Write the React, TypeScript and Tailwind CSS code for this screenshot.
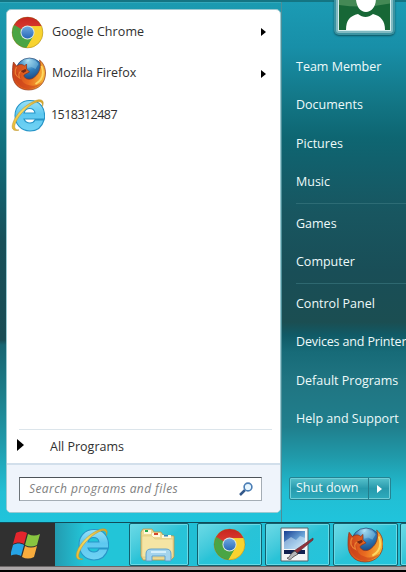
import React from "react";

type IconProps = { className?: string };

function ChromeIcon({ className }: IconProps) {
  return (
    <svg viewBox="0 0 32 32" className={className}>
      <defs>
        <linearGradient id="cr" x1="0" y1="0" x2="0" y2="1">
          <stop offset="0" stopColor="#c8251f" />
          <stop offset="1" stopColor="#e2473b" />
        </linearGradient>
        <linearGradient id="cb" x1="0" y1="0" x2="0" y2="1">
          <stop offset="0" stopColor="#6fa9e0" />
          <stop offset="1" stopColor="#2868b8" />
        </linearGradient>
      </defs>
      <circle cx="16" cy="16" r="15" fill="#f8d32f" />
      <path d="M16 16 3 8.500A15 15 0 0 0 15 31l7-12z" fill="#4aa544" />
      <path d="M3 8.500A15 15 0 0 1 29.700 10H16L9.500 19.500z" fill="url(#cr)" />
      <path d="M15 31A15 15 0 0 0 29.700 10H16l6 9.500z" fill="#f8d32f" />
      <path d="M3 8.500 9.500 20l1-7z" fill="#4aa544" />
      <circle cx="16" cy="16" r="6.800" fill="#dfe9e3" />
      <circle cx="16" cy="16" r="5.900" fill="url(#cb)" />
      <circle cx="16" cy="16" r="15" fill="none" stroke="#735c2b" strokeOpacity=".4" strokeWidth=".8" />
    </svg>
  );
}

function FirefoxIcon({ className }: IconProps) {
  return (
    <svg viewBox="0 0 34 34" className={className}>
      <defs>
        <radialGradient id="fb" cx=".45" cy=".1" r=".85">
          <stop offset="0" stopColor="#b4e6f8" />
          <stop offset=".4" stopColor="#3180bd" />
          <stop offset="1" stopColor="#102b65" />
        </radialGradient>
        <linearGradient id="fo" x1="0" y1=".3" x2="1" y2=".5">
          <stop offset="0" stopColor="#c9421b" />
          <stop offset=".55" stopColor="#ea6b20" />
          <stop offset="1" stopColor="#f8b936" />
        </linearGradient>
      </defs>
      <circle cx="18" cy="15" r="14" fill="url(#fb)" stroke="#163262" strokeWidth=".6" />
      <path d="M16 5c4-3 9-2 11 2l-3 5-4-2-4 1z" fill="#8bc9e6" opacity=".5" />
      <path d="M2 5l3 4c3-2 6-2 8 0l2-2v5l3 3-4 2c-2 1-2 2-1 3 2 3 7 3 10 0 5-4 7-10 5-17 4 3 6 8 6 13 0 10-7 17-17 17S1 26 1 17c0-5 0-8 1-12z" fill="url(#fo)" stroke="#8f331a" strokeWidth=".7" />
      <path d="M3 19c1 7 7 13 14 13 6 0 11-3 14-7-4 3-9 5-14 3-5-1-8-5-8-10l-3-3z" fill="#c63c19" opacity=".55" />
      <path d="M5 10c-3 5-1 9 3 11-2-4 0-7 4-8" fill="none" stroke="#f4943b" strokeWidth="1.200" opacity=".75" />
      <path d="M30 9c3 8 1 14-6 18" fill="none" stroke="#ffe16b" strokeWidth="1.800" opacity=".85" />
      <path d="M9 14l5-2 1 2-3 2z" fill="#742816" />
    </svg>
  );
}

function ExplorerIcon({ className }: IconProps) {
  return (
    <svg viewBox="0 0 34 34" className={className}>
      <defs>
        <linearGradient id="ie" x1="0" y1="0" x2="0" y2="1">
          <stop offset="0" stopColor="#9be2f8" />
          <stop offset=".45" stopColor="#5dc8f0" />
          <stop offset="1" stopColor="#72d3f4" />
        </linearGradient>
        <linearGradient id="ring" x1="0" y1="1" x2="1" y2="0">
          <stop offset="0" stopColor="#e8b72e" />
          <stop offset=".5" stopColor="#f6dc62" />
          <stop offset="1" stopColor="#d5a426" />
        </linearGradient>
      </defs>
      <path fillRule="evenodd" d="M19 2.500C10 2.500 4 9 4 17.500S10 33 19 33c7 0 12-4 14-11h-9c-1 2-3 3-5 3-3 0-5-1.500-6-4h20.500C34.500 10 29 2.500 19 2.500zM13 15c1-3 3-4.500 5.500-4.500S23.500 12 24 15z" fill="url(#ie)" stroke="#2795c8" strokeWidth="1.100" />
      <path d="M31.500 8.500C34 2 30 .2 23 3.200 14 7 5 16 2 24.500c-2.200 6 0 9.500 6 7.500-4.500.3-5.300-3-3.300-7.500C8 17 15.500 9 23.500 5c5-2.500 8.500-1.500 8 3.500z" fill="url(#ring)" stroke="#bb9331" strokeWidth=".5" />
    </svg>
  );
}

function WindowsIcon() {
  return (
    <svg viewBox="0 0 30 28" className="h-[28px] w-[30px]">
      <path d="M5 2c4-2 7-2 11 0l-3 11c-4-2-7-2-11 0z" fill="#e3262d" />
      <path d="M17 3c4 2 8 2 12 0l-3 11c-4 2-8 2-12 0z" fill="#88c440" />
      <path d="M2 14c4-2 7-2 11 0l-3 11c-4-2-7-2-11 0z" fill="#26a4e6" />
      <path d="M14 15c4 2 8 2 12 0l-3 11c-4 2-8 2-12 0z" fill="#f8ac3d" />
    </svg>
  );
}

function FolderIcon() {
  return (
    <svg viewBox="0 0 38 36" className="h-[36px] w-[38px]">
      <path d="M2 5 4 2h9l2 3h7l2 3 11 1v21l-3 3H4L2 29z" fill="#edda94" stroke="#b8974b" strokeWidth=".8" />
      <path d="M5 3h7v4H5zm8 3h8v4h-8zm10 2h9v3h-9z" fill="#fff8dc" />
      <path d="M6 3h3v2H6z" fill="#25a748" /><path d="M15 6h4v2h-4z" fill="#d5472c" /><path d="M25 8h4v1.500h-4z" fill="#3487bd" />
      <path d="M3 9h10l3 3h18v18H3z" fill="#f5e5a4" stroke="#d7bd70" strokeWidth=".5" />
      <path d="M7 34v-7q0-5 5-5h15q5 0 5 5v7h-6v-5H13v5z" fill="#a4d4ed" stroke="#5a9cc8" strokeWidth=".9" />
      <path d="M12 25h15" stroke="#e6f8ff" strokeWidth="1.500" />
    </svg>
  );
}

function PaintIcon() {
  return (
    <svg viewBox="0 0 34 36" className="h-[36px] w-[34px]">
      <defs>
        <linearGradient id="sky" x1="0" y1="0" x2="1" y2="1">
          <stop offset="0" stopColor="#173d91" /><stop offset=".6" stopColor="#6faadb" /><stop offset="1" stopColor="#e8f3fb" />
        </linearGradient>
      </defs>
      <path d="M1 1h27v33H1z" fill="#f3f5f6" stroke="#55656d" />
      <path d="M4 4h21v18H4z" fill="url(#sky)" />
      <path d="M4 15l7-5 5 3 4-4 5 2v11H4z" fill="#d5eaf8" opacity=".5" />
      <path d="M4 23h21v4H4z" fill="#102150" />
      <path d="m33 11-19 13 2 3 17-14z" fill="#923039" stroke="#622e35" strokeWidth=".7" />
      <path d="m15 24 3 3-5 3c-2 3-4 3-6 1 3 0 3-5 8-7z" fill="#b4b5b8" stroke="#444" strokeWidth=".8" />
    </svg>
  );
}

function Arrow({ className }: IconProps) {
  return <svg viewBox="0 0 5 8" preserveAspectRatio="none" className={className}><path d="M0 0 5 4 0 8z" fill="currentColor" /></svg>;
}

function Place({ children }: { children: React.ReactNode }) {
  return <div className="flex h-[38.5px] items-center whitespace-nowrap">{children}</div>;
}

function Separator() {
  return <div className="h-[3px] pt-px"><div className="h-px bg-[#3c7a82]/60" /></div>;
}

export default function App() {
  const taskButton = "flex h-[43px] shrink-0 items-center justify-center rounded-[2px] border border-[#12606e] bg-linear-to-br from-[#6bdae6] via-[#29c3d7] to-[#23c4dc] shadow-[inset_0_0_0_1px_#68dae6]";
  return (
    <main className="flex h-[572px] w-[406px] flex-col overflow-hidden bg-black font-['Open_Sans','Noto_Sans',sans-serif] text-[12.5px] font-medium">
      <section className="flex h-[522px] border-t-2 border-[#147583] bg-[linear-gradient(to_bottom,#1b9bb1_0px,#168da3_70px,#11717f_140px,#125f6c_190px,#174f58_240px,#194c54_338px,#176572_343px,#1c7d89_390px,#209aaa_440px,#22bfd4_490px,#20c4dc_520px)] pl-[6px] shadow-[inset_0_1px_#31a8bb]">
        <div className="flex w-[275px] shrink-0 flex-col pt-[7px]">
          <div className="flex h-[504px] flex-col overflow-hidden rounded-[5px] border border-[#9bc9d1] bg-white text-[#303030]">
            <div className="flex h-[419px] flex-col pt-px">
              <div className="flex h-[42px] items-center pr-[14px] pl-[4px]"><ChromeIcon className="h-[33px] w-[33px]" /><span className="ml-[8px] tracking-[0.08px]">Google Chrome</span><Arrow className="ml-auto h-[8px] w-[5px] text-black" /></div>
              <div className="flex h-[41px] items-center pr-[14px] pl-[4px]"><FirefoxIcon className="h-[34px] w-[35px]" /><span className="ml-[6px]">Mozilla Firefox</span><Arrow className="ml-auto h-[8px] w-[5px] text-black" /></div>
              <div className="flex h-[42px] items-center pl-[4px]"><ExplorerIcon className="h-[34px] w-[34px]" /><span className="ml-[6px] tracking-[-0.55px]">1518312487</span></div>
            </div>
            <div className="mr-[8px] ml-[12px] h-px shrink-0 bg-[#dce5eb]" />
            <div className="flex h-[33px] shrink-0 items-center pl-[10px]"><Arrow className="mb-[3px] h-[12px] w-[7px] text-black" /><span className="ml-[26px] pt-px">All Programs</span></div>
            <div className="flex flex-1 items-center border-t-2 border-[#d2dfeb] bg-[#eff4fb] pl-[12px]">
              <div className="flex h-[24px] w-[243px] items-center justify-between border border-[#a5adb5] border-t-[#4e5358] border-l-[#6d7378] bg-white pr-[8px] pl-[9px]">
                <span className="text-[12px] font-normal tracking-[0.42px] text-[#808080] italic">Search programs and files</span>
                <svg viewBox="0 0 14 14" className="h-[14px] w-[14px]"><path d="m1 13 5-5" stroke="#34598a" strokeWidth="2.500" /><circle cx="9" cy="5" r="3.900" fill="#e7f6ff" stroke="#4c7eb5" strokeWidth="1.600" /></svg>
              </div>
            </div>
          </div>
        </div>
        <aside className="flex min-w-0 flex-1 flex-col border-l border-[#4d8e98] bg-[linear-gradient(to_bottom,#1b9bb4_0px,#188fa8_45px,#137888_95px,#0e6672_135px,#125f6b_165px,#185660_210px,#194e57_270px,#1b4e52_320px,#105a66_333px,#176b78_350px,#207582_380px,#207f8d_425px,#209aaa_455px,#21bed3_490px,#20c4dc_520px)] pl-[14px] text-[#edfafa]">
          <div className="-mt-[2px] flex h-[48px] shrink-0 items-start pl-[38px]">
            <div className="h-[35px] w-[61px] rounded-b-[5px] border-2 border-t-0 border-[#3c93a1] bg-[#80bac2] px-[2px] pb-[2px] shadow-[0_1px_2px_#0e5360]">
              <div className="h-full overflow-hidden border border-t-0 border-[#d6eeee] bg-[#176736]">
                <svg viewBox="0 0 53 30" className="h-[30px] w-[53px]"><path d="M0 0h53v3Q27 9 0 5z" fill="#62a06a" opacity=".6" /><path d="M17-6h19c3 9-2 18-9 18S16 4 17-6zM7 30c0-10 4-14 12-16 5 4 10 4 15 0 8 2 12 7 12 16z" fill="white" /></svg>
              </div>
            </div>
          </div>
          <Place>Team Member</Place><Place>Documents</Place><Place>Pictures</Place><Place>Music</Place>
          <Separator />
          <Place>Games</Place><Place>Computer</Place>
          <Separator />
          <Place>Control Panel</Place><Place><span className="tracking-[-0.15px]">Devices and Printer</span></Place><Place>Default Programs</Place><Place>Help and Support</Place>
          <div className="mt-[38px] -ml-[7px] flex h-[23px] w-[102px] shrink-0 rounded-[2px] border border-[#258392] bg-linear-to-b from-[#55c2cc] via-[#279aac] to-[#2eacbd] shadow-[inset_0_0_0_1px_#70cfd8]">
            <div className="flex w-[78px] items-center pl-[6px] whitespace-nowrap">Shut down</div>
            <div className="flex flex-1 items-center justify-center border-l border-[#237d8c]"><Arrow className="h-[8px] w-[5px] text-white" /></div>
          </div>
        </aside>
      </section>
      <footer className="flex h-[44px] shrink-0 border-t border-[#124b58] bg-[#21bfd5]">
        <div className="flex w-[55px] shrink-0 items-center justify-center bg-[#303030] pr-[3px]"><WindowsIcon /></div>
        <div className="flex w-[74px] shrink-0 items-center justify-center bg-linear-to-r from-[#239bb0] to-[#22c5d8] to-40% pb-px"><ExplorerIcon className="h-[34px] w-[34px]" /></div>
        <div className={`${taskButton} w-[60px] pr-[2px]`}><FolderIcon /></div>
        <div className={`${taskButton} ml-[8px] w-[65px]`}><ChromeIcon className="h-[33px] w-[33px]" /></div>
        <div className={`${taskButton} ml-[3px] w-[65px] pr-[2px]`}><PaintIcon /></div>
        <div className={`${taskButton} ml-[3px] w-[65px] pr-[2px]`}><FirefoxIcon className="h-[36px] w-[36px]" /></div>
        <div className={`${taskButton} ml-[2px] w-[65px]`} />
      </footer>
      <div className="h-[4px] shrink-0 border-t border-[#6b6666] bg-[#aca7a8]" />
    </main>
  );
}
